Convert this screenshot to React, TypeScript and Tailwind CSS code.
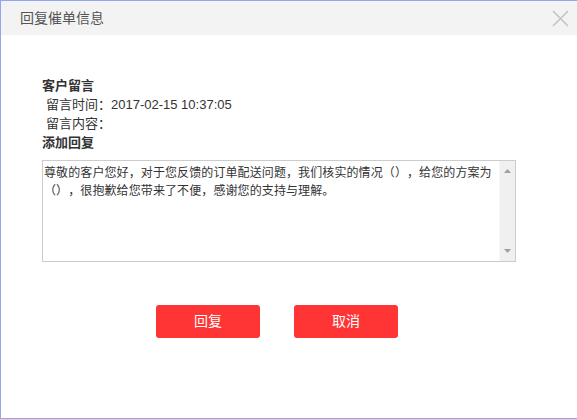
import React from "react";

export default function App() {
  const font = {
    fontFamily: '"Liberation Sans", "Noto Sans CJK SC", sans-serif',
  };
  return (
    <div
      className="w-[577px] h-[419px] bg-white border-t border-l border-b border-[#8fa6f6] flex flex-col overflow-hidden [text-spacing-trim:space-all]"
      style={font}
    >
      <div className="h-[34px] shrink-0 bg-[#f3f3f3] flex items-center justify-between pl-[19px] pr-[8px]">
        <span className="text-[14px] text-[#555555] leading-none">回复催单信息</span>
        <svg width="17" height="17" viewBox="0 0 17 17">
          <path d="M1 1 L16 16 M16 1 L1 16" stroke="#c4c4c4" strokeWidth="1.6" fill="none" />
        </svg>
      </div>
      <div className="pl-[41px] pt-[41px] flex flex-col text-[13px] text-[#333333]">
        <div className="h-[19px] leading-[19px] font-bold">客户留言</div>
        <div className="h-[19px] leading-[19px] pl-[4px]">留言时间：2017-02-15 10:37:05</div>
        <div className="h-[19px] leading-[19px] pl-[4px]">留言内容：</div>
        <div className="h-[19px] leading-[19px] font-bold">添加回复</div>
        <div className="mt-[8px] w-[474px] h-[102px] border border-[#cccccc] flex">
          <div className="flex-1 pl-[1px] pr-0 pt-[3px] text-[12px] leading-[18px] text-[#333333] tracking-[0.1px]">
            尊敬的客户您好，对于您反馈的订单配送问题，我们核实的情况（），给您的方案为（），很抱歉给您带来了不便，感谢您的支持与理解。
          </div>
          <div className="w-[16px] shrink-0 bg-[#f0f0f0] border-l border-[#f7f7f7] flex flex-col items-center justify-between py-[8px]">
            <svg width="7" height="4" viewBox="0 0 7 4">
              <path d="M0 4 L3.5 0 L7 4 Z" fill="#a0a0a0" />
            </svg>
            <svg width="7" height="4" viewBox="0 0 7 4">
              <path d="M0 0 L3.5 4 L7 0 Z" fill="#a0a0a0" />
            </svg>
          </div>
        </div>
        <div className="mt-[43px] ml-[114px] flex gap-[34px]">
          <button className="w-[104px] h-[33px] rounded-[3px] bg-[#ff3434] text-white text-[14px]">
            回复
          </button>
          <button className="w-[104px] h-[33px] rounded-[3px] bg-[#ff3434] text-white text-[14px]">
            取消
          </button>
        </div>
      </div>
    </div>
  );
}
